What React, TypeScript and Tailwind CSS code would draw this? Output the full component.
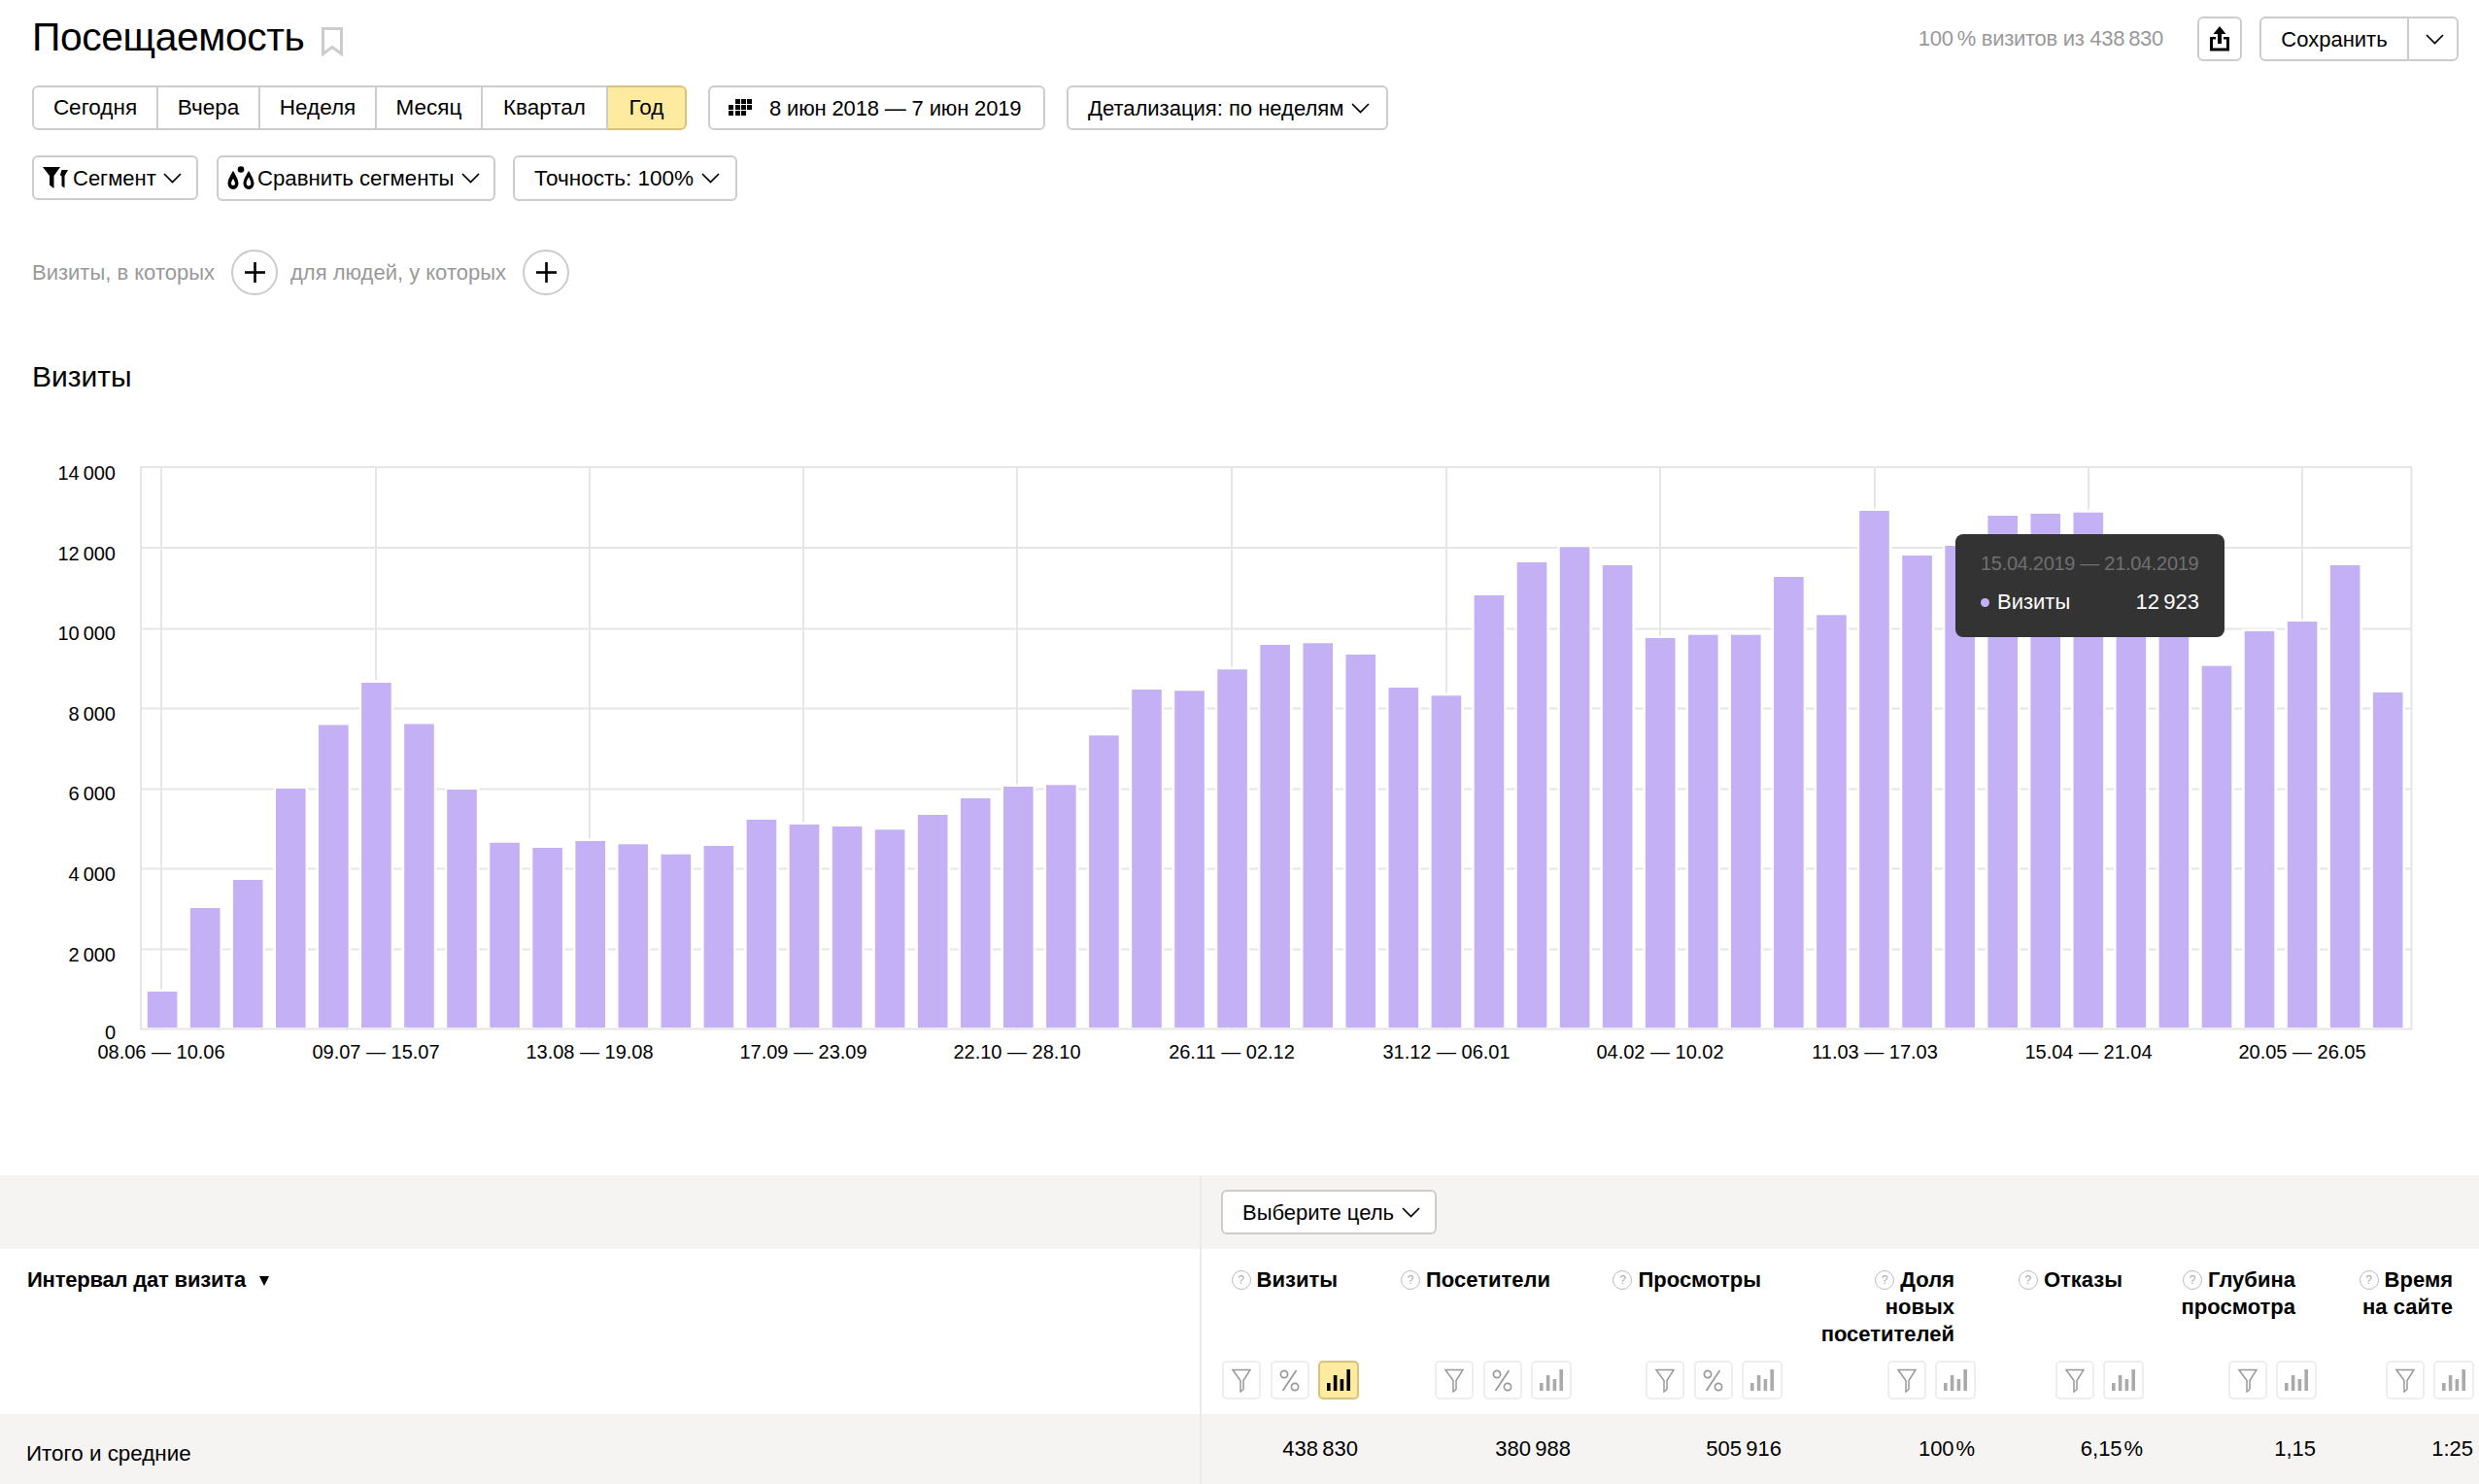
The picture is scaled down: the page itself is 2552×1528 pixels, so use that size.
import { clsx } from 'clsx'

const PERIODS = [
  { label: 'Сегодня', w: 'w-[130px]' },
  { label: 'Вчера', w: 'w-[105px]' },
  { label: 'Неделя', w: 'w-[120px]' },
  { label: 'Месяц', w: 'w-[109px]' },
  { label: 'Квартал', w: 'w-[129px]' },
]

// верх столбца в координатах страницы
const BAR_TOPS = [
  1021, 935, 906, 812, 746.5, 703, 745.5, 813, 867.7, 873, 866, 869.3, 879.7, 871, 844, 849, 851, 854.3, 839, 822, 810,
  808.3, 757.3, 710, 711.3, 689.3, 664, 662.3, 674, 708, 716.3, 613, 579, 563.3, 582, 657, 653.7, 653.7, 594, 633.3, 526,
  572, 562, 531, 529, 527.7, 610, 625, 685.7, 650, 640, 582, 713,
]

const GRID_Y = [481, 564, 647.5, 729.5, 812.5, 894.5, 977.5]
const Y_LABELS = ['14\u2009000', '12\u2009000', '10\u2009000', '8\u2009000', '6\u2009000', '4\u2009000', '2\u2009000']
const X_TICKS = [
  ['08.06 — 10.06', 166],
  ['09.07 — 15.07', 387],
  ['13.08 — 19.08', 607],
  ['17.09 — 23.09', 827],
  ['22.10 — 28.10', 1047],
  ['26.11 — 02.12', 1268],
  ['31.12 — 06.01', 1489],
  ['04.02 — 10.02', 1709],
  ['11.03 — 17.03', 1930],
  ['15.04 — 21.04', 2150],
  ['20.05 — 26.05', 2370],
] as const

const COLUMNS = [
  { w: 'w-[162px]', title: ['Визиты'], value: '438\u2009830', percent: true, active: true },
  { w: 'w-[219px]', title: ['Посетители'], value: '380\u2009988', percent: true },
  { w: 'w-[217px]', title: ['Просмотры'], value: '505\u2009916', percent: true },
  { w: 'w-[199px]', title: ['Доля', 'новых', 'посетителей'], value: '100\u200a%' },
  { w: 'w-[173px]', title: ['Отказы'], value: '6,15\u200a%' },
  { w: 'w-[178px]', title: ['Глубина', 'просмотра'], value: '1,15' },
  { w: 'w-[162px]', title: ['Время', 'на сайте'], value: '1:25' },
]

function Chevron({ className }: { className?: string }) {
  return (
    <svg width="19" height="11" viewBox="0 0 19 11" fill="none" stroke="#000" strokeWidth="1.7" className={className}>
      <path d="M1 1l8.5 8.5L18 1" />
    </svg>
  )
}

function Btn({ className, children }: { className?: string; children: React.ReactNode }) {
  return (
    <div className={clsx('flex items-center rounded-[6px] border-2 border-[#ccc] bg-white text-black', className)}>
      {children}
    </div>
  )
}

function HelpIcon() {
  return (
    <span className="ml-[2px] mr-[6px] inline-flex h-[20px] w-[20px] translate-y-[-1px] items-center justify-center rounded-full border-[1.5px] border-[#bbb] align-middle text-[12px] font-normal text-[#aaa]">
      ?
    </span>
  )
}

function FunnelIcon() {
  return (
    <svg width="20" height="25" viewBox="0 0 20 25" fill="none" stroke="#999" strokeWidth="1.5">
      <path d="M1 1.5h18L12 12.5v9l-3 2.5V12.5z" />
    </svg>
  )
}

function PercentIcon() {
  return (
    <svg width="21" height="25" viewBox="0 0 21 25" fill="none" stroke="#999" strokeWidth="1.7">
      <path d="M17.5 2L3.5 23" />
      <circle cx="5" cy="6" r="3.6" />
      <circle cx="16" cy="19" r="3.6" />
    </svg>
  )
}

function BarsIcon({ color }: { color: string }) {
  return (
    <svg width="24" height="22" viewBox="0 0 24 22" fill={color}>
      <rect x="0" y="14" width="3.6" height="8" />
      <rect x="6.8" y="6" width="3.6" height="16" />
      <rect x="13.6" y="10" width="3.6" height="12" />
      <rect x="20.4" y="0" width="3.6" height="22" />
    </svg>
  )
}

function ToolBtn({ active, wide, children }: { active?: boolean; wide?: boolean; children: React.ReactNode }) {
  return (
    <div
      className={clsx(
        'flex h-[40px] items-center justify-center rounded-[5px] border-2',
        wide ? 'w-[42px]' : 'w-[40px]',
        active ? 'border-[#d6c27c] bg-[#ffeba0]' : 'border-[#eee] bg-white',
      )}
    >
      {children}
    </div>
  )
}

function PlusCircle() {
  return (
    <div className="flex h-[47px] w-[48px] items-center justify-center rounded-full border-2 border-[#ccc]">
      <svg width="21" height="21" viewBox="0 0 21 21" fill="#000">
        <rect x="9.2" y="0" width="2.6" height="21" />
        <rect x="0" y="9.2" width="21" height="2.6" />
      </svg>
    </div>
  )
}

function Chart() {
  return (
    <div className="relative h-[640px]">
      <svg width="2552" height="640" viewBox="0 470 2552 640" className="block">
        <g stroke="#e6e6e6" strokeWidth="2">
          {GRID_Y.map(y => (
            <line key={y} x1="144" x2="2483" y1={y} y2={y} />
          ))}
          {X_TICKS.map(([, x]) => (
            <line key={x} x1={x} x2={x} y1="481" y2="1060" />
          ))}
          <line x1="145" x2="145" y1="481" y2="1060" />
          <line x1="2482.5" x2="2482.5" y1="481" y2="1060" />
          <line x1="144" x2="2483.5" y1="1059.5" y2="1059.5" />
        </g>
        {BAR_TOPS.map((top, i) => {
          const x = 151.8 + i * 44.06
          return (
            <g key={i}>
              <rect x={x - 2.5} y={top - 2.5} width={35.6} height={1058 - top + 2.5} fill="#fff" />
              <rect x={x} y={top} width={30.6} height={1058 - top} fill="#c4b0f5" />
            </g>
          )
        })}
        <g fontSize="20" fill="#000">
          {Y_LABELS.map((label, i) => (
            <text key={label} x="119" y={494 + i * 82.6} textAnchor="end">
              {label}
            </text>
          ))}
          <text x="119" y="1069.5" textAnchor="end">
            0
          </text>
          {X_TICKS.map(([label, x]) => (
            <text key={x} x={x} y="1090" textAnchor="middle">
              {label}
            </text>
          ))}
        </g>
      </svg>

      <div className="absolute left-[2013px] top-[80px] flex h-[106px] w-[277px] flex-col rounded-[8px] bg-[#333] px-[26px] pt-[17px]">
        <div className="text-[20px] leading-[26px] tracking-[-0.3px] text-[#707070]">15.04.2019 — 21.04.2019</div>
        <div className="mt-[14px] flex items-center justify-between text-[22px] leading-[26px] text-white">
          <div className="flex items-center">
            <span className="mr-[8px] h-[9px] w-[9px] rounded-full bg-[#c4b0f5]" />
            Визиты
          </div>
          <div>12{'\u2009'}923</div>
        </div>
      </div>
    </div>
  )
}

function Table() {
  return (
    <div className="flex flex-col">
      <div className="flex h-[76px] bg-[#f5f4f2]">
        <div className="w-[1235px]" />
        <div className="border-l-2 border-[#eaeaea] pl-[20px] pt-[15px]">
          <Btn className="h-[46px] w-[222px] pl-[20px] text-[22px]">
            Выберите цель
            <Chevron className="ml-[8px]" />
          </Btn>
        </div>
      </div>

      <div className="flex h-[170px] bg-white">
        <div className="w-[1235px] pl-[28px] pt-[18px] text-[22px] font-bold leading-[28px] tracking-[-0.2px] text-black">
          Интервал дат визита
          <span className="ml-[14px] inline-block h-0 w-0 border-x-[5px] border-t-[10px] border-x-transparent border-t-black align-middle" />
        </div>
        <div className="flex border-l-2 border-[#eaeaea]">
          {COLUMNS.map(col => (
            <div key={col.title[0]} className={clsx('flex flex-col items-end justify-between pb-[15px] pt-[18px]', col.w)}>
              <div className="mr-[22px] whitespace-nowrap text-right text-[22px] font-bold leading-[28px] text-black">
                {col.title.map((line, i) => (
                  <div key={line}>
                    {i === 0 && <HelpIcon />}
                    {line}
                  </div>
                ))}
              </div>
              <div className="flex gap-[9.5px]">
                <ToolBtn>
                  <FunnelIcon />
                </ToolBtn>
                {col.percent && (
                  <ToolBtn>
                    <PercentIcon />
                  </ToolBtn>
                )}
                <ToolBtn wide active={col.active}>
                  <BarsIcon color={col.active ? '#000' : '#aaa'} />
                </ToolBtn>
              </div>
            </div>
          ))}
        </div>
      </div>

      <div className="flex h-[72px] bg-[#f5f4f2] leading-[28px] text-black">
        <div className="w-[1235px] pl-[27px] pt-[27px] text-[22.4px]">Итого и средние</div>
        <div className="flex border-l-2 border-[#eaeaea] text-[22px]">
          {COLUMNS.map(col => (
            <div key={col.title[0]} className={clsx('whitespace-nowrap pr-[1px] pt-[22px] text-right', col.w)}>
              {col.value}
            </div>
          ))}
        </div>
      </div>
    </div>
  )
}

export default function App() {
  return (
    <div className="h-[1528px] w-[2552px] overflow-hidden bg-white font-['Liberation_Sans',Arial,sans-serif] text-black">
      <div className="flex h-[63px] items-start justify-between pl-[33px] pr-[21px]">
        <div className="flex items-start">
          <div className="pt-[15px] text-[40.8px] leading-[46px] tracking-[-0.4px]">Посещаемость</div>
          <svg width="22" height="31" viewBox="0 0 22 31" fill="none" stroke="#ccc" strokeWidth="3" className="ml-[18px] mt-[28px]">
            <path d="M1.5 1.5h19v26L11 20.5l-9.5 7z" />
          </svg>
        </div>
        <div className="flex items-center pt-[17px]">
          <div className="mb-[2px] mr-[35px] text-[22px] tracking-[-0.3px] text-[#999]">100{'\u2009'}% визитов из 438{'\u2009'}830</div>
          <Btn className="h-[46px] w-[46px] justify-center">
            <svg width="20" height="26" viewBox="0 0 20 26" fill="#000">
              <path d="M10 0l6.5 8H12v10H8V8H3.5z" />
              <path d="M0 11h6v2.5H3v9h14v-9h-3V11h6v14.5H0z" />
            </svg>
          </Btn>
          <Btn className="ml-[18px] h-[46px] w-[205px] text-[22px]">
            <div className="flex h-full w-[152px] items-center justify-center border-r-2 border-[#ccc]">Сохранить</div>
            <Chevron className="ml-[17px]" />
          </Btn>
        </div>
      </div>

      <div className="mt-[25px] flex pl-[33px]">
        <div className="flex h-[46px] overflow-hidden rounded-[6px] text-[22.5px]">
          {PERIODS.map((p, i) => (
            <div
              key={p.label}
              className={clsx(
                'flex items-center justify-center border-y-2 border-r-2 border-[#ccc]',
                p.w,
                i === 0 && 'rounded-l-[6px] border-l-2',
              )}
            >
              {p.label}
            </div>
          ))}
          <div className="flex w-[81px] items-center justify-center rounded-r-[6px] border-2 border-l-0 border-[#d6c27c] bg-[#ffeba0]">
            Год
          </div>
        </div>
        <Btn className="ml-[22px] h-[46px] w-[347px] pl-[19px] text-[22px] tracking-[-0.15px]">
          <svg width="25" height="18" viewBox="0 0 25 18" fill="#000" className="mr-[17px]">
            <path d="M7 0h5v5H7zM13 0h5v5h-5zM19 0h5v5h-5zM0 6h5v5H0zM7 6h5v5H7zM13 6h5v5h-5zM19 6h5v5h-5zM0 12h5v5H0zM7 12h5v5H7zM13 12h5v5h-5z" />
          </svg>
          8 июн 2018 — 7 июн 2019
        </Btn>
        <Btn className="ml-[22px] h-[46px] w-[331px] pl-[20px] text-[22px]">
          Детализация: по неделям
          <Chevron className="ml-[8px]" />
        </Btn>
      </div>

      <div className="mt-[26px] flex items-start pl-[33px]">
        <Btn className="h-[46px] w-[171px] pl-[9px] text-[22px]">
          <svg width="26" height="22" viewBox="0 0 26 22" fill="#000" className="mr-[5px]">
            <path d="M0 0h18l-6.5 9V22l-4.5-3.5V9z" />
            <path d="M19.5 3H26l-3.5 6v12.5l-3-2V9.5l-1.6-1.3z" />
          </svg>
          Сегмент
          <Chevron className="ml-[7px]" />
        </Btn>
        <Btn className="ml-[19px] h-[47px] w-[287px] pl-[9px] text-[22.2px]">
          <svg width="28" height="25" viewBox="0 0 28 25" fill="#000" className="mr-[3px]">
            <path
              d="M6 5s-5.5 8-5.5 13a5.5 6 0 0 0 11 0c0-5-5.5-13-5.5-13zm0 8s-2 3-2 5a2 2 0 0 0 4 0c0-2-2-5-2-5z"
              fillRule="evenodd"
            />
            <circle cx="14" cy="3.5" r="3.3" />
            <path
              d="M22 5s-5.5 8-5.5 13a5.5 6 0 0 0 11 0c0-5-5.5-13-5.5-13zm0 6.5s-2.4 3.6-2.4 6.5a2.4 2.4 0 0 0 4.8 0c0-2.9-2.4-6.5-2.4-6.5z"
              fillRule="evenodd"
            />
          </svg>
          Сравнить сегменты
          <Chevron className="ml-[7px]" />
        </Btn>
        <Btn className="ml-[18px] h-[47px] w-[231px] pl-[20px] text-[22.5px]">
          Точность: 100%
          <Chevron className="ml-[8px]" />
        </Btn>
      </div>

      <div className="mt-[50px] flex items-center pl-[33px] text-[22px] text-[#999]">
        <span>Визиты, в которых</span>
        <div className="ml-[17px] mr-[13px]">
          <PlusCircle />
        </div>
        <span>для людей, у которых</span>
        <div className="ml-[17px]">
          <PlusCircle />
        </div>
      </div>

      <div className="mt-[64px] pl-[33px] text-[30px] leading-[40px]">Визиты</div>

      <div className="mt-[62px]">
        <Chart />
      </div>

      <div className="mt-[100px]">
        <Table />
      </div>
    </div>
  )
}
